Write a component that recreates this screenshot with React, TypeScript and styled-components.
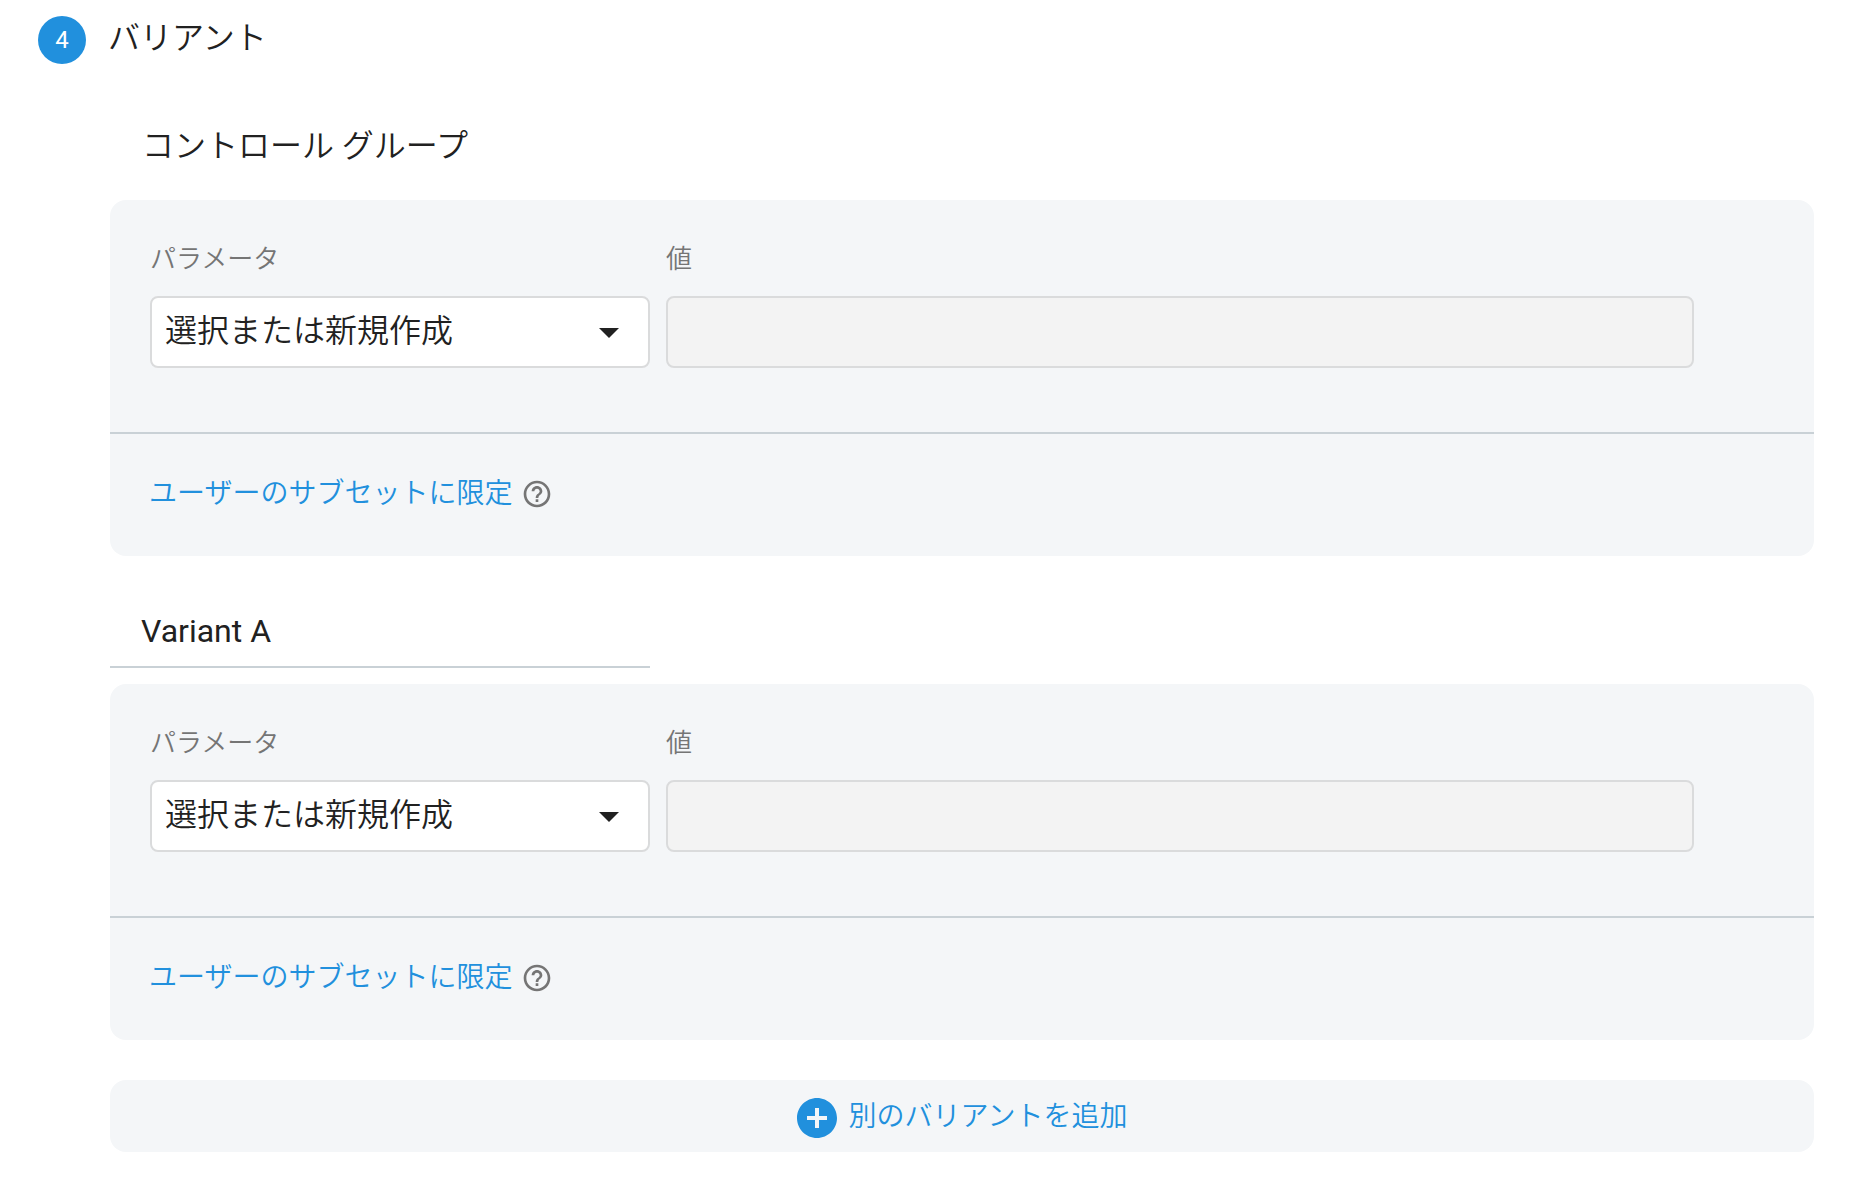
import React, { useId, useState } from "react";
import styled, { createGlobalStyle } from "styled-components";

const color = {
  text: "#212121",
  muted: "#757575",
  accent: "#2190dd",
  panel: "#f4f6f8",
  rule: "#c9d1d6",
  border: "#dadbdc",
  disabled: "#f3f3f3",
};

const GlobalStyle = createGlobalStyle`
  *, *::before, *::after { box-sizing: border-box; }
  body {
    margin: 0;
    background: #fff;
    color: ${color.text};
    font-family: Roboto, "Noto Sans CJK JP", sans-serif;
    font-size: 32px;
    font-weight: 350;
    line-height: 48px;
  }
  button, input, select { font: inherit; color: inherit; margin: 0; }
`;

const Page = styled.main`
  padding: 16px 44px 28px 38px;
`;

const StepHeader = styled.header`
  display: flex;
  align-items: flex-start;
  gap: 22px;
`;

const StepNumber = styled.span`
  width: 48px;
  height: 48px;
  flex: none;
  border-radius: 50%;
  background: ${color.accent};
  color: #fff;
  font-size: 24px;
  font-weight: 400;
  text-align: center;
`;

const StepTitle = styled.h2`
  margin: 0;
  font-size: 32px;
  font-weight: 350;
  line-height: 44px;
`;

const StepBody = styled.div`
  display: flex;
  flex-direction: column;
  gap: 40px;
  padding: 48px 0 0 72px;
`;

const VariantSection = styled.section`
  display: flex;
  flex-direction: column;
`;

const GroupName = styled.h3`
  margin: 0;
  padding: 10px 32px 30px;
  font-size: 32px;
  font-weight: 350;
  line-height: 48px;
`;

const NameInput = styled.input`
  width: 540px;
  max-width: 100%;
  height: 72px;
  margin-bottom: 16px;
  padding: 0 31px;
  border: 0;
  border-bottom: 2px solid ${color.rule};
  background: transparent;
  font-weight: 400;
  outline-color: ${color.accent};
`;

const Card = styled.div`
  border-radius: 16px;
  background: ${color.panel};
`;

const Fields = styled.div`
  display: grid;
  grid-template-columns: minmax(0, 500px) minmax(0, 1fr);
  gap: 16px;
  padding: 40px 120px 64px 40px;
`;

const Field = styled.div`
  display: flex;
  flex-direction: column;
  gap: 18px;
`;

const Label = styled.label`
  color: ${color.muted};
  font-size: 26px;
  line-height: 38px;
`;

const SelectBox = styled.div`
  position: relative;
`;

const Select = styled.select`
  display: block;
  width: 100%;
  height: 72px;
  padding: 0 64px 2px 13px;
  appearance: none;
  border: 2px solid ${color.border};
  border-radius: 8px;
  background: #fff;
  text-overflow: ellipsis;
`;

const SelectArrow = styled.svg`
  position: absolute;
  top: 12px;
  right: 17px;
  width: 48px;
  height: 48px;
  fill: ${color.text};
  pointer-events: none;
`;

const ValueInput = styled.input`
  width: 100%;
  height: 72px;
  padding: 0 16px;
  border: 2px solid ${color.border};
  border-radius: 8px;
  background: ${color.disabled};
`;

const CardFooter = styled.div`
  display: flex;
  align-items: center;
  gap: 9px;
  padding: 36px 39px 38px;
  border-top: 2px solid ${color.rule};
`;

const TextButton = styled.button`
  padding: 0;
  border: 0;
  background: none;
  color: ${color.accent};
  font-size: 28px;
  line-height: 48px;
  cursor: pointer;
`;

const HelpButton = styled.button`
  display: flex;
  padding: 0;
  border: 0;
  background: none;
  cursor: help;
`;

const HelpGlyph = styled.svg`
  width: 32px;
  height: 32px;
  fill: ${color.muted};
`;

const AddButton = styled.button`
  display: flex;
  align-items: center;
  justify-content: center;
  gap: 8px;
  width: 100%;
  padding: 14px 20px 10px 16px;
  border: 0;
  border-radius: 16px;
  background: ${color.panel};
  color: ${color.accent};
  font-size: 28px;
  cursor: pointer;
`;

const AddGlyph = styled.svg`
  width: 48px;
  height: 48px;
  fill: currentColor;
`;

const AddLabel = styled.span`
  padding-bottom: 2px;
  line-height: 44px;
`;

function VariantCard() {
  const id = useId();
  return (
    <Card>
      <Fields>
        <Field>
          <Label htmlFor={`${id}-parameter`}>パラメータ</Label>
          <SelectBox>
            <Select id={`${id}-parameter`}>
              <option>選択または新規作成</option>
            </Select>
            <SelectArrow viewBox="0 0 24 24" aria-hidden="true">
              <path d="M7 10l5 5 5-5z" />
            </SelectArrow>
          </SelectBox>
        </Field>
        <Field>
          <Label htmlFor={`${id}-value`}>値</Label>
          <ValueInput id={`${id}-value`} type="text" disabled />
        </Field>
      </Fields>
      <CardFooter>
        <TextButton type="button">ユーザーのサブセットに限定</TextButton>
        <HelpButton type="button" aria-label="ヘルプ">
          <HelpGlyph viewBox="0 0 24 24" aria-hidden="true">
            <path d="M11 18h2v-2h-2v2zm1-16C6.48 2 2 6.48 2 12s4.48 10 10 10 10-4.48 10-10S17.52 2 12 2zm0 18c-4.41 0-8-3.59-8-8s3.59-8 8-8 8 3.59 8 8-3.59 8-8 8zm0-14c-2.21 0-4 1.79-4 4h2c0-1.1.9-2 2-2s2 .9 2 2c0 2-3 1.75-3 5h2c0-2.25 3-2.5 3-5 0-2.21-1.79-4-4-4z" />
          </HelpGlyph>
        </HelpButton>
      </CardFooter>
    </Card>
  );
}

export default function App() {
  const [name, setName] = useState("Variant A");
  return (
    <>
      <GlobalStyle />
      <Page>
        <StepHeader>
          <StepNumber>4</StepNumber>
          <StepTitle>バリアント</StepTitle>
        </StepHeader>
        <StepBody>
          <VariantSection>
            <GroupName>コントロール グループ</GroupName>
            <VariantCard />
          </VariantSection>
          <VariantSection>
            <NameInput
              type="text"
              aria-label="バリアント名"
              value={name}
              onChange={(e) => setName(e.target.value)}
            />
            <VariantCard />
          </VariantSection>
          <AddButton type="button">
            <AddGlyph viewBox="0 0 24 24" aria-hidden="true">
              <path d="M12 2C6.48 2 2 6.48 2 12s4.48 10 10 10 10-4.48 10-10S17.52 2 12 2zm5 11h-4v4h-2v-4H7v-2h4V7h2v4h4v2z" />
            </AddGlyph>
            <AddLabel>別のバリアントを追加</AddLabel>
          </AddButton>
        </StepBody>
      </Page>
    </>
  );
}
